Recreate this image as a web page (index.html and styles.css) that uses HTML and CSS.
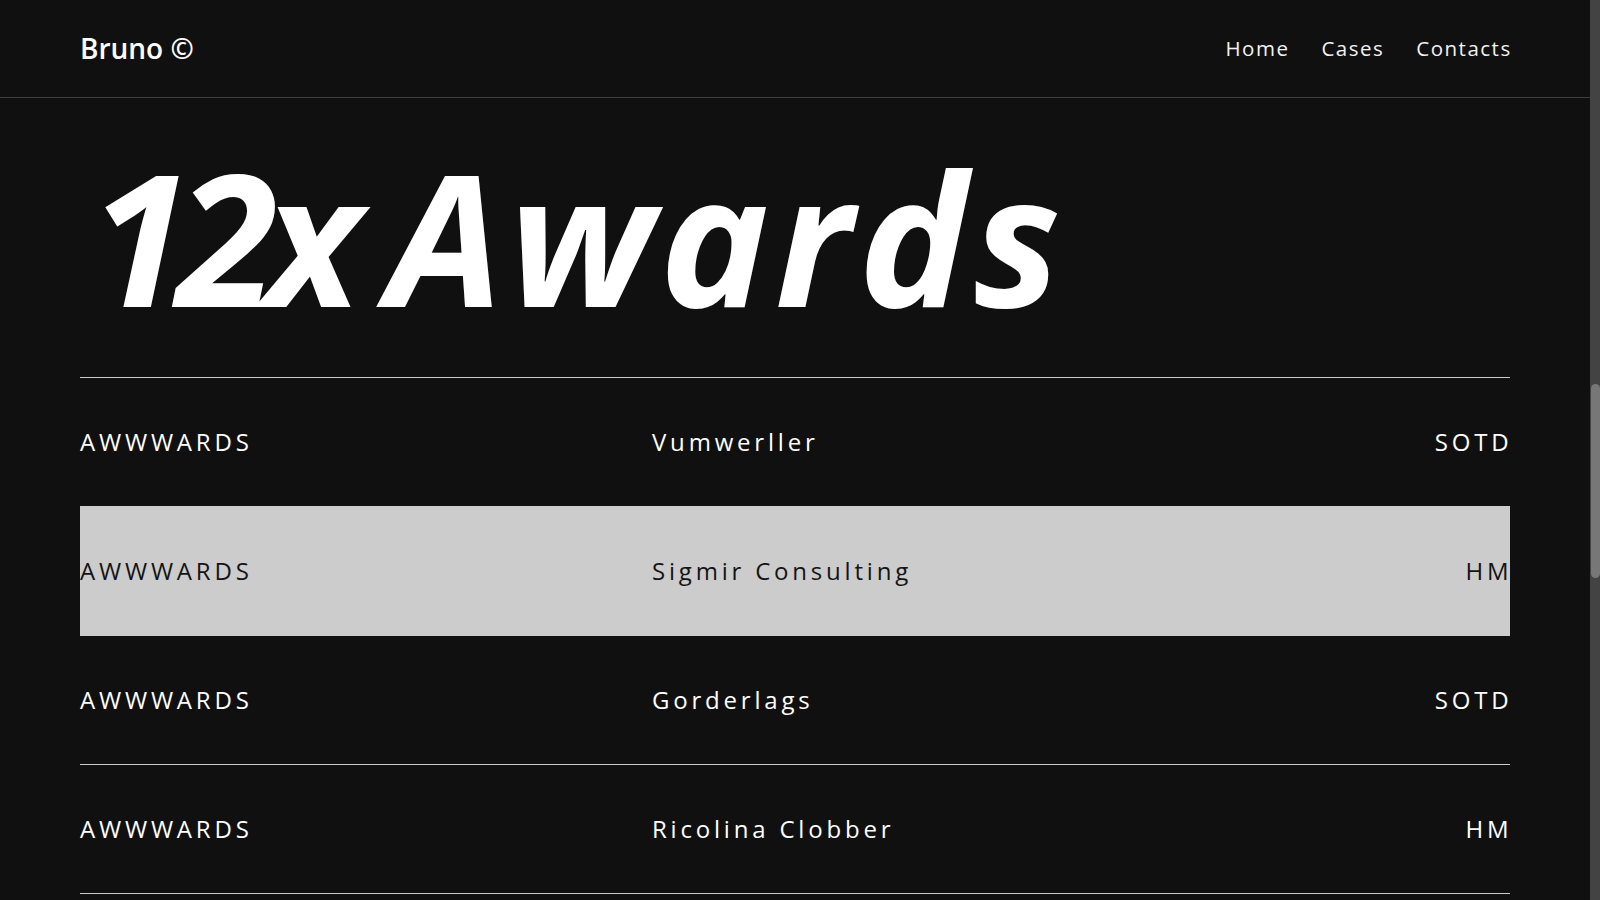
FILE: index.html
```html
<!DOCTYPE html>
<html lang="en">
<head>
<meta charset="utf-8">
<title>Bruno © — Awards</title>
<link rel="stylesheet" href="styles.css">
</head>
<body>
<div class="frame">
  <div class="page">
    <header class="site-header">
      <a class="logo" href="#">Bruno ©</a>
      <nav class="nav">
        <a class="nav-link" href="#">Home</a>
        <a class="nav-link" href="#">Cases</a>
        <a class="nav-link" href="#">Contacts</a>
      </nav>
    </header>
    <main class="awards">
      <h1 class="awards-title"><span class="title-count">12x</span> <span class="title-word">Awards</span></h1>
      <ul class="award-list">
        <li class="award-row">
          <span class="award-org">AWWWARDS</span>
          <span class="award-project">Vumwerller</span>
          <span class="award-type">SOTD</span>
        </li>
        <li class="award-row is-active">
          <span class="award-org">AWWWARDS</span>
          <span class="award-project">Sigmir Consulting</span>
          <span class="award-type">HM</span>
        </li>
        <li class="award-row">
          <span class="award-org">AWWWARDS</span>
          <span class="award-project">Gorderlags</span>
          <span class="award-type">SOTD</span>
        </li>
        <li class="award-row">
          <span class="award-org">AWWWARDS</span>
          <span class="award-project">Ricolina Clobber</span>
          <span class="award-type">HM</span>
        </li>
      </ul>
    </main>
  </div>
  <div class="scrollbar"><div class="scrollbar-thumb"></div></div>
</div>
</body>
</html>
```

FILE: styles.css
```css
* {
  box-sizing: border-box;
}

html,
body {
  margin: 0;
  padding: 0;
  height: 900px;
  overflow: hidden;
  background: #101010;
  color: #ffffff;
  font-family: "Open Sans", "Noto Sans", sans-serif;
}

.frame {
  display: flex;
  height: 900px;
}

.page {
  flex: 1;
  min-width: 0;
}

/* ---------- header ---------- */
.site-header {
  height: 98px;
  padding: 0 80px;
  display: flex;
  align-items: center;
  justify-content: space-between;
  border-bottom: 1px solid #3f3f3f;
}

.logo {
  color: #ffffff;
  text-decoration: none;
  font-size: 28px;
  font-weight: 600;
  letter-spacing: 0;
  padding-bottom: 2px;
}

.nav {
  display: flex;
  gap: 32px;
  margin-right: -1.7px;
  padding-bottom: 2px;
}

.nav-link {
  color: #f2f2f2;
  text-decoration: none;
  font-size: 20.5px;
  font-weight: 400;
  letter-spacing: 1.5px;
}

/* ---------- awards ---------- */
.awards {
  padding: 0 80px;
}

.awards-title {
  margin: 46px 0 49px 9px;
  font-size: 184px;
  line-height: 1;
  font-weight: 700;
  font-style: italic;
  letter-spacing: -7px;
  color: #ffffff;
  white-space: nowrap;
}

.title-count {
  letter-spacing: -14px;
  margin-right: -1px;
}

.title-word {
  letter-spacing: 6px;
}

.award-list {
  list-style: none;
  margin: 0;
  padding: 0;
  border-bottom: 1px solid #cccccc;
}

.award-row {
  display: grid;
  grid-template-columns: 40% 1fr auto;
  align-items: center;
  height: 129px;
  padding-bottom: 2px;
  border-top: 1px solid #cccccc;
  font-size: 24px;
  letter-spacing: 3.8px;
  color: #ffffff;
}

.award-row.is-active {
  background: #cccccc;
  color: #141414;
}

.award-type {
  text-align: right;
  margin-right: -2.5px;
}

/* ---------- scrollbar ---------- */
.scrollbar {
  width: 10px;
  height: 900px;
  background: #434343;
  padding-top: 384px;
}

.scrollbar-thumb {
  width: 9px;
  margin-left: 1px;
  height: 194px;
  border-radius: 5px;
  background: #777777;
}
```
